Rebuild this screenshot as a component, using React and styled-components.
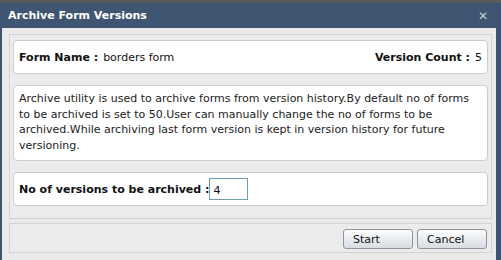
import React from "react";
import styled, { createGlobalStyle } from "styled-components";

const Global = createGlobalStyle`
  html, body { margin: 0; padding: 0; }
  body {
    width: 501px;
    height: 260px;
    overflow: hidden;
    background: #5a5a5a;
    font-family: "DejaVu Sans", Verdana, sans-serif;
  }
`;

const Dialog = styled.div`
  margin-top: 3px;
  height: 257px;
  box-sizing: border-box;
  background: #eaeaea;
  border-left: 2px solid #3f5472;
  border-right: 5px solid #3f5472;
  display: flex;
  flex-direction: column;
`;

const TitleBar = styled.div`
  height: 25px;
  background: #405571;
  display: flex;
  align-items: center;
  justify-content: space-between;
  padding: 0 8px 0 6px;
  color: #fff;
  font-weight: bold;
  font-size: 11px;
`;

const Close = styled.span`
  color: #c9ced6;
  font-size: 12px;
  font-weight: bold;
  line-height: 1;
`;

const Body = styled.div`
  flex: 1;
  display: flex;
  flex-direction: column;
  padding: 6px 4px 0 7px;
  gap: 4px;
`;

const Panel = styled.div`
  border: 1px solid #d3d3d3;
  background: #ebebeb;
  padding: ${(p) => p.$pad};
  display: flex;
  flex-direction: ${(p) => (p.$row ? "row" : "column")};
  justify-content: ${(p) => (p.$row ? "flex-end" : "flex-start")};
  gap: ${(p) => p.$gap || "0"};
`;

const Card = styled.div`
  background: #fff;
  border: 1px solid #cdcdcd;
  border-radius: 4px;
  min-height: ${(p) => p.$h};
  box-sizing: border-box;
  padding: ${(p) => p.$pad || "0 5px"};
  display: flex;
  align-items: center;
  justify-content: ${(p) => p.$justify || "flex-start"};
  font-size: 11px;
  color: #111;
`;

const Label = styled.span`
  font-weight: bold;
  font-size: 11px;
  color: #111;
`;

const Value = styled.span`
  font-size: 11px;
  margin-left: 5px;
`;

const Para = styled.p`
  margin: 0;
  font-size: 11px;
  line-height: 15.5px;
  color: #222;
`;

const Input = styled.input`
  width: 39px;
  height: 22px;
  box-sizing: border-box;
  margin-left: 0;
  border: 1px solid #6f9bb3;
  padding: 2px 3px 0;
  font-family: "DejaVu Sans", Verdana, sans-serif;
  font-size: 11px;
  color: #111;
  outline: none;
`;

const Button = styled.button`
  width: 70px;
  height: 20px;
  border: 1px solid #8c95a0;
  border-radius: 3px;
  background: linear-gradient(#fdfdfd, #e9ecef 50%, #d9dde2);
  font-family: "DejaVu Sans", Verdana, sans-serif;
  font-size: 11px;
  color: #111;
  text-align: left;
  padding: 0 0 0 9px;
`;

export default function App() {
  return (
    <>
      <Global />
      <Dialog>
        <TitleBar>
          <span>Archive Form Versions</span>
          <Close>✕</Close>
        </TitleBar>
        <Body>
          <Panel $pad="5px 3px 12px" $gap="11px">
            <Card $h="34px" $justify="space-between">
              <span>
                <Label>Form Name :</Label>
                <Value>borders form</Value>
              </span>
              <span>
                <Label>Version Count :</Label>
                <Value>5</Value>
              </span>
            </Card>
            <Card $h="76px" $pad="3px 5px 5px">
              <Para>
                Archive utility is used to archive forms from version history.By default no of forms
                to be archived is set to 50.User can manually change the no of forms to be
                archived.While archiving last form version is kept in version history for future
                versioning.
              </Para>
            </Card>
            <Card $h="34px">
              <Label>No of versions to be archived :</Label>
              <Input defaultValue="4" />
            </Card>
          </Panel>
          <Panel $row $pad="5px 4px 3px" $gap="4px">
            <Button>Start</Button>
            <Button>Cancel</Button>
          </Panel>
        </Body>
      </Dialog>
    </>
  );
}
